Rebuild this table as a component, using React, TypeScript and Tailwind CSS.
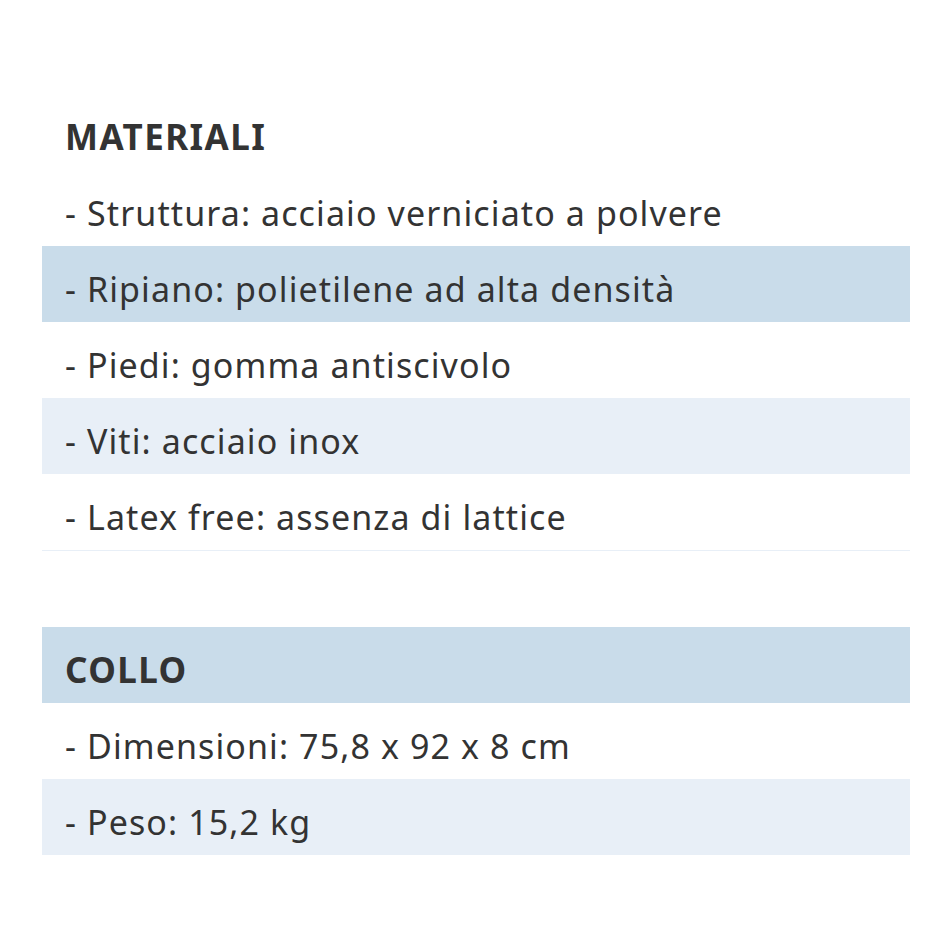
const materiali = [
  { text: '- Struttura: acciaio verniciato a polvere', bg: 'bg-white' },
  { text: '- Ripiano: polietilene ad alta densità', bg: 'bg-[#c9dcea]' },
  { text: '- Piedi: gomma antiscivolo', bg: 'bg-white' },
  { text: '- Viti: acciaio inox', bg: 'bg-[#e8eff7]' },
  { text: '- Latex free: assenza di lattice', bg: 'bg-white' },
];

const collo = [
  { text: '- Dimensioni: 75,8 x 92 x 8 cm', bg: 'bg-white' },
  { text: '- Peso: 15,2 kg', bg: 'bg-[#e8eff7]' },
];

function Row({ text, bg, bold }: { text: string; bg: string; bold?: boolean }) {
  return (
    <div className={`${bg} h-[76px] flex items-center px-[23px] pt-[10px]`}>
      <span
        className={
          bold
            ? 'font-bold text-[35px] tracking-[1.4px]'
            : 'text-[34px] tracking-[1.1px]'
        }
      >
        {text}
      </span>
    </div>
  );
}

export default function App() {
  return (
    <div className="min-h-screen bg-white pt-[94px] text-[#333333] font-['Noto_Sans','Open_Sans',sans-serif]">
      <div className="ml-[42px] w-[868px]">
        <div className="border-b border-[#e8eff7]">
          <Row text="MATERIALI" bg="bg-white" bold />
          {materiali.map((r) => (
            <Row key={r.text} text={r.text} bg={r.bg} />
          ))}
        </div>
        <div className="mt-[76px]">
          <Row text="COLLO" bg="bg-[#c9dcea]" bold />
          {collo.map((r) => (
            <Row key={r.text} text={r.text} bg={r.bg} />
          ))}
        </div>
      </div>
    </div>
  );
}
